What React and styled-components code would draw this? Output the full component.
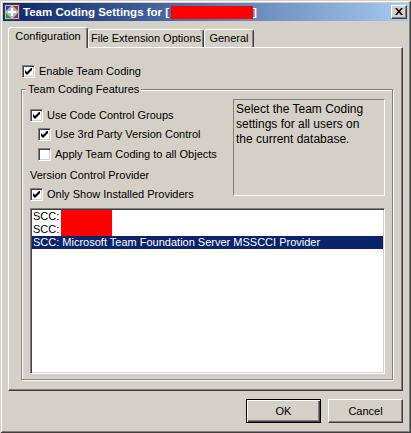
import styled, { createGlobalStyle } from "styled-components";

const GlobalStyle = createGlobalStyle`
  html, body {
    margin: 0;
    padding: 0;
    background: #d4d0c8;
  }
  body {
    font-family: "Liberation Sans", Arial, sans-serif;
    font-size: 11px;
    color: #000;
  }
`;

const Window = styled.div`
  width: 411px;
  height: 433px;
  box-sizing: border-box;
  padding: 3px;
  background: #d4d0c8;
  display: flex;
  flex-direction: column;
  box-shadow: inset 1px 1px 0 #d4d0c8, inset -1px -1px 0 #404040,
    inset 2px 2px 0 #fff, inset -2px -2px 0 #808080;
`;

const TitleBar = styled.div`
  height: 18px;
  display: flex;
  align-items: center;
  padding: 0 1px 0 1px;
  background: linear-gradient(to right, #0a246a, #a6caf0);
`;

const TitleText = styled.div`
  display: flex;
  align-items: center;
  margin-left: 3px;
  color: #fff;
  font-weight: bold;
  font-size: 11.5px;
  white-space: nowrap;
`;

const Redacted = styled.span`
  display: inline-block;
  width: ${(p) => p.$w}px;
  height: ${(p) => p.$h}px;
  margin-left: ${(p) => p.$ml || 0}px;
  background: #ff0000;
`;

const CloseButton = styled.div`
  margin-left: auto;
  width: 16px;
  height: 14px;
  box-sizing: border-box;
  background: #d4d0c8;
  border: 1px solid;
  border-color: #fff #404040 #404040 #fff;
  box-shadow: inset -1px -1px 0 #808080;
  display: flex;
  align-items: center;
  justify-content: center;
  padding: 0 1px 1px 0;
`;

const Body = styled.div`
  padding: 0 5px;
  margin-top: 6px;
  display: flex;
  flex-direction: column;
`;

const TabRow = styled.div`
  display: flex;
  align-items: flex-end;
  height: 20px;
`;

const Tab = styled.div`
  width: ${(p) => p.$w}px;
  height: ${(p) => (p.$active ? 21 : 18)}px;
  margin-bottom: ${(p) => (p.$active ? -1 : 0)}px;
  box-sizing: border-box;
  border: 1px solid;
  border-color: #fff #404040 transparent #fff;
  border-bottom: none;
  border-radius: 3px 3px 0 0;
  box-shadow: inset -1px 0 0 #808080;
  background: #d4d0c8;
  position: relative;
  z-index: ${(p) => (p.$active ? 1 : 0)};
  display: flex;
  justify-content: center;
  padding-top: 2px;
  line-height: 13px;
  white-space: nowrap;
`;

const Panel = styled.div`
  width: 395px;
  height: 344px;
  box-sizing: border-box;
  border: 1px solid;
  border-color: #fff #404040 #404040 #fff;
  box-shadow: inset -1px -1px 0 #808080;
  padding: 17px 11px 0 12px;
  display: flex;
  flex-direction: column;
`;

const CheckRow = styled.div`
  display: flex;
  align-items: center;
  gap: 4px;
  height: 13px;
  line-height: 13px;
  margin-left: ${(p) => p.$indent || 0}px;
  margin-top: ${(p) => p.$mt || 0}px;
  white-space: nowrap;
`;

const CheckBox = styled.span`
  width: 13px;
  height: 13px;
  box-sizing: border-box;
  flex: none;
  background: #fff;
  border: 1px solid;
  border-color: #808080 #fff #fff #808080;
  box-shadow: inset 1px 1px 0 #404040, inset -1px -1px 0 #d4d0c8;
  display: flex;
  align-items: center;
  justify-content: center;
`;

const GroupBox = styled.div`
  margin-top: 11px;
  width: 372px;
  height: 291px;
  box-sizing: border-box;
  border: 1px solid #808080;
  box-shadow: 1px 1px 0 #fff, inset 1px 1px 0 #fff;
  padding: 0 7px 0 8px;
  display: flex;
  flex-direction: column;
`;

const GroupTitle = styled.span`
  align-self: flex-start;
  margin: -7px 0 0 -4px;
  padding: 0 2px;
  line-height: 13px;
  background: #d4d0c8;
`;

const TopRow = styled.div`
  display: flex;
  margin-top: 3px;
`;

const LeftCol = styled.div`
  flex: 1;
  padding-top: 10px;
  display: flex;
  flex-direction: column;
`;

const Label = styled.div`
  height: 13px;
  line-height: 13px;
  margin-top: ${(p) => p.$mt || 0}px;
`;

const InfoBox = styled.div`
  width: 152px;
  height: 97px;
  box-sizing: border-box;
  border: 1px solid;
  border-color: #808080 #fff #fff #808080;
  padding: 2px 2px;
  font-size: 12px;
  line-height: 15px;
  white-space: nowrap;
`;

const ListBox = styled.div`
  margin-top: 7px;
  width: 355px;
  height: 166px;
  box-sizing: border-box;
  background: #fff;
  border: 1px solid;
  border-color: #808080 #fff #fff #808080;
  box-shadow: inset 1px 1px 0 #404040, inset -1px -1px 0 #d4d0c8;
  padding: 1px;
`;

const ListItem = styled.div`
  height: 13px;
  line-height: 13px;
  padding-left: 1px;
  display: flex;
  align-items: center;
  white-space: nowrap;
  background: ${(p) => (p.$selected ? "#0a246a" : "transparent")};
  color: ${(p) => (p.$selected ? "#fff" : "#000")};
`;

const ButtonRow = styled.div`
  display: flex;
  justify-content: flex-end;
  gap: 7px;
  margin-top: 8px;
`;

const Button = styled.button`
  width: 75px;
  height: 24px;
  box-sizing: border-box;
  padding: 0;
  font-family: "Liberation Sans", Arial, sans-serif;
  font-size: 11px;
  color: #000;
  background: #d4d0c8;
  border: 1px solid;
  border-color: ${(p) =>
    p.$default ? "#000" : "#fff #404040 #404040 #fff"};
  box-shadow: ${(p) =>
    p.$default
      ? "inset 1px 1px 0 #fff, inset -1px -1px 0 #404040, inset -2px -2px 0 #808080"
      : "inset -1px -1px 0 #808080"};
`;

const Check = () => (
  <svg width="7" height="7" viewBox="0 0 7 7">
    <path d="M0 2 L2 4 L7 -1 L7 2 L2 7 L0 5 Z" fill="#000" />
  </svg>
);

const Box = ({ checked }) => <CheckBox>{checked && <Check />}</CheckBox>;

const AppIcon = () => (
  <svg width="16" height="16" viewBox="0 0 16 16">
    <rect x="0.5" y="0.5" width="15" height="15" fill="#b8b8c0" stroke="#404050" />
    <path d="M2 2 L7 2 L2 7 Z" fill="#2a3fb8" />
    <path d="M14 2 L9 2 L14 7 Z" fill="#c02828" />
    <path d="M2 14 L7 14 L2 9 Z" fill="#1f9a4a" />
    <path d="M14 14 L9 14 L14 9 Z" fill="#b02060" />
    <path d="M7 4 H9 V7 H12 V9 H9 V12 H7 V9 H4 V7 H7 Z" fill="#fff" />
  </svg>
);

const CloseGlyph = () => (
  <svg width="8" height="7" viewBox="0 0 8 7">
    <path
      d="M0 0 L2 0 L4 2.4 L6 0 L8 0 L5 3.5 L8 7 L6 7 L4 4.6 L2 7 L0 7 L3 3.5 Z"
      fill="#000"
    />
  </svg>
);

const App = () => {
  return (
    <>
      <GlobalStyle />
      <Window>
        <TitleBar>
          <AppIcon />
          <TitleText>
            Team Coding Settings for [<Redacted $w={82} $h={13} $ml={2} />]
          </TitleText>
          <CloseButton>
            <CloseGlyph />
          </CloseButton>
        </TitleBar>

        <Body>
          <TabRow>
            <Tab $active $w={80}>Configuration</Tab>
            <Tab $w={116}>File Extension Options</Tab>
            <Tab $w={50}>General</Tab>
          </TabRow>

          <Panel>
            <CheckRow $indent={1}>
              <Box checked />
              Enable Team Coding
            </CheckRow>

            <GroupBox>
              <GroupTitle>Team Coding Features</GroupTitle>
              <TopRow>
                <LeftCol>
                  <CheckRow>
                    <Box checked />
                    Use Code Control Groups
                  </CheckRow>
                  <CheckRow $indent={8} $mt={6}>
                    <Box checked />
                    Use 3rd Party Version Control
                  </CheckRow>
                  <CheckRow $indent={8} $mt={7}>
                    <Box />
                    Apply Team Coding to all Objects
                  </CheckRow>
                  <Label $mt={8}>Version Control Provider</Label>
                  <CheckRow $mt={6}>
                    <Box checked />
                    Only Show Installed Providers
                  </CheckRow>
                </LeftCol>
                <InfoBox>
                  Select the Team Coding
                  <br />
                  settings for all users on
                  <br />
                  the current database.
                </InfoBox>
              </TopRow>

              <ListBox>
                <ListItem>
                  SCC:<Redacted $w={51} $h={13} $ml={2} />
                </ListItem>
                <ListItem>
                  SCC:<Redacted $w={51} $h={13} $ml={2} />
                </ListItem>
                <ListItem $selected>
                  SCC: Microsoft Team Foundation Server MSSCCI Provider
                </ListItem>
              </ListBox>
            </GroupBox>
          </Panel>

          <ButtonRow>
            <Button $default>OK</Button>
            <Button>Cancel</Button>
          </ButtonRow>
        </Body>
      </Window>
    </>
  );
};

export default App;
